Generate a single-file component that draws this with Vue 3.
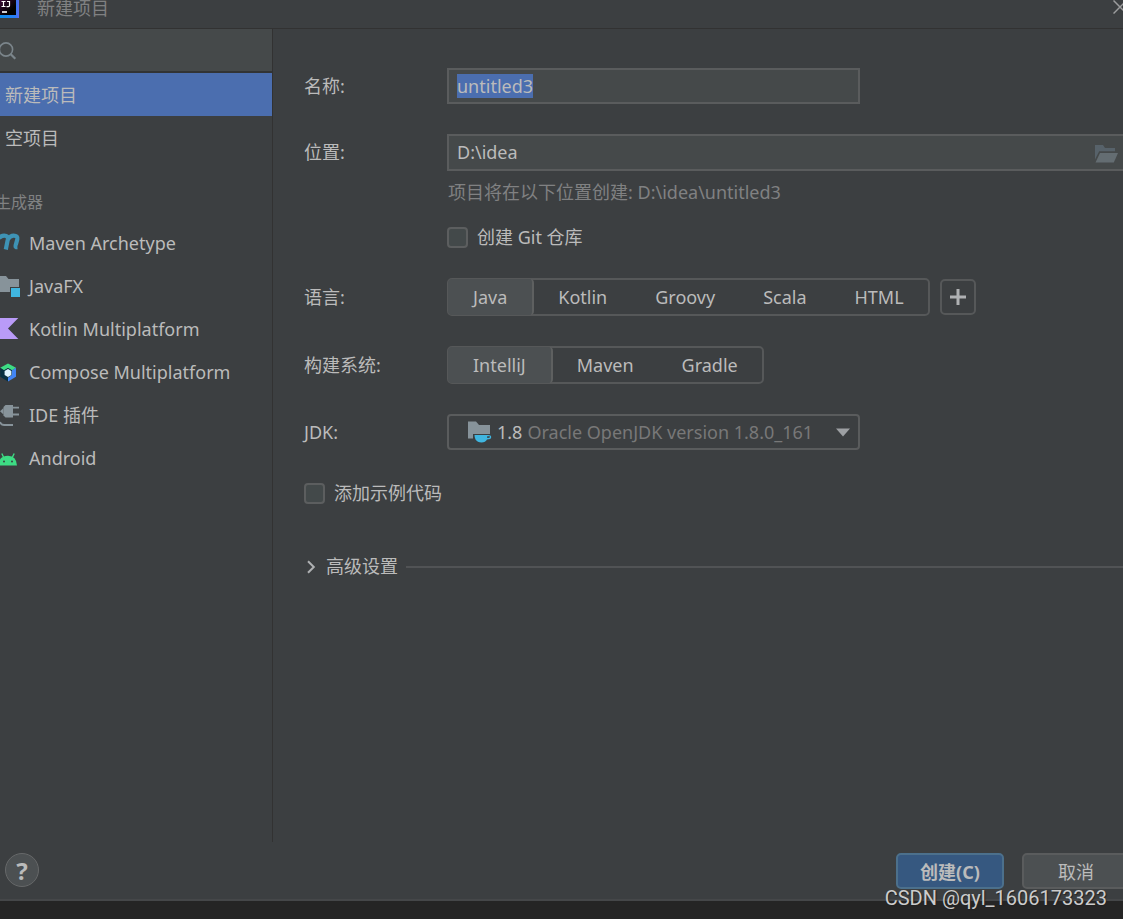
<script setup>
import { onMounted, ref } from 'vue'

const projectName = ref('untitled3')
const location = ref('D:\\idea')
const gitRepo = ref(false)
const sampleCode = ref(false)
const jdk = ref('1.8')
const language = ref('Java')
const buildSystem = ref('IntelliJ')
const search = ref('')
const nameInput = ref(null)

const languages = ['Java', 'Kotlin', 'Groovy', 'Scala', 'HTML']
const buildSystems = ['IntelliJ', 'Maven', 'Gradle']
const generators = [
  { id: 'maven', label: 'Maven Archetype' },
  { id: 'javafx', label: 'JavaFX' },
  { id: 'kotlin', label: 'Kotlin Multiplatform' },
  { id: 'compose', label: 'Compose Multiplatform' },
  { id: 'plugin', label: 'IDE 插件' },
  { id: 'android', label: 'Android' },
]

onMounted(() => {
  nameInput.value.focus()
  nameInput.value.select()
})
</script>

<template>
  <div class="screen">
    <div class="dialog">
      <header class="titlebar">
        <svg class="logo" width="19" height="18" viewBox="0 0 19 18" aria-hidden="true">
          <defs>
            <linearGradient id="logo-edge" x1="0" y1="0" x2="1" y2="0">
              <stop offset="0" stop-color="#0b8ff0" />
              <stop offset="0.8" stop-color="#2a7df5" />
              <stop offset="1" stop-color="#5b6bf0" />
            </linearGradient>
            <linearGradient id="logo-core" x1="0" y1="0" x2="1" y2="1">
              <stop offset="0" stop-color="#3a0a35" />
              <stop offset="0.7" stop-color="#000" />
            </linearGradient>
          </defs>
          <rect width="19" height="18" fill="url(#logo-edge)" />
          <rect width="16" height="15" fill="url(#logo-core)" />
          <path d="M1.5 1.5h4M3.5 1.5v5M1.5 6.5h4M7 1.5h2.5v4q0 1.2-1.2 1.2H6.5" fill="none" stroke="#fff" stroke-width="1.2" />
          <path d="M2 12h5" stroke="#fff" stroke-width="1.6" />
        </svg>
        <h1>新建项目</h1>
        <button class="close" type="button" aria-label="关闭">
          <svg width="14" height="14" viewBox="0 0 14 14"><path d="M0.5 0.5l13 13M13.5 0.5l-13 13" stroke="#9c9d9e" stroke-width="1.5" /></svg>
        </button>
      </header>

      <div class="body">
        <aside class="sidebar">
          <label class="search">
            <svg width="17" height="20" viewBox="0 0 17 20" aria-hidden="true">
              <circle cx="6" cy="9.5" r="6.6" fill="none" stroke="#7b858b" stroke-width="1.6" />
              <path d="M10.5 14l4.8 4.8" stroke="#7b858b" stroke-width="2.2" />
            </svg>
            <input v-model="search" type="search" aria-label="搜索" />
          </label>
          <nav>
            <button class="entry selected" type="button">新建项目</button>
            <button class="entry" type="button">空项目</button>
            <h2>生成器</h2>
            <button v-for="g in generators" :key="g.id" class="entry generator" type="button">
              <svg width="21" height="24" viewBox="0 0 21 24" aria-hidden="true">
                <g v-if="g.id === 'maven'" fill="none" stroke="#3e93b5" stroke-width="4.2">
                  <path d="M-1 6Q1.2 3.6 4.2 3.6Q8.4 3.6 7.8 7.4L5.8 17.5" />
                  <path d="M7.8 7.4Q10.2 3.6 13.6 3.6Q18 3.6 17.3 7.4L15.6 13.6Q15.2 15.4 17.4 15.2" />
                </g>
                <g v-else-if="g.id === 'javafx'">
                  <path d="M0 1h6l2.5 3H19v8h-9V17H0z" fill="#87939a" />
                  <path d="M11 13h9v9h-9z" fill="#40b6e0" />
                </g>
                <path v-else-if="g.id === 'kotlin'" d="M0 0h18.3L8 10.5l10.3 10.5H0z" fill="#b99bf8" />
                <g v-else-if="g.id === 'compose'">
                  <path d="M8 2.5l8 4.3-4 2.6L8 7l-4 2.4-3.8-2.6z" fill="#3ddc84" />
                  <path d="M0.2 6.8L4 9.2v4.6l4 2.7V20.5L0.2 15.8z" fill="#083042" />
                  <path d="M16 6.8v9L8 20.5v-4l4-2.7V9.2z" fill="#4285f4" />
                  <path d="M4 9.2L8 7l4 2.2v4.6l-4 2.7-4-2.7z" fill="#083042" />
                  <path d="M8 8l3.4 2v4L8 16l-3.4-2v-4z" fill="#dff4ff" />
                </g>
                <g v-else-if="g.id === 'plugin'">
                  <path d="M5.5 1H13v12.5H5.5L3.5 11.5V3z" fill="#87939a" />
                  <path d="M0 7.2L3.5 4v6.4z" fill="#87939a" />
                  <path d="M13 3.7h6M13 10.5h6M0 18q1 3 4 3h9" fill="none" stroke="#87939a" stroke-width="1.8" />
                </g>
                <g v-else>
                  <path d="M-2 18.5Q-1.3 9 8 8.8Q16.4 9 17 18.5z" fill="#3ddc84" />
                  <path d="M1.8 6.5l2.4 5M14.2 6.5l-2.4 5" stroke="#3ddc84" stroke-width="1.4" />
                  <circle cx="4" cy="14.5" r="1" fill="#3c3f41" />
                  <circle cx="12" cy="14.5" r="1" fill="#3c3f41" />
                </g>
              </svg>
              {{ g.label }}
            </button>
          </nav>
        </aside>

        <main class="form">
          <div class="row">
            <label for="name">名称:</label>
            <input id="name" ref="nameInput" v-model="projectName" class="field medium" type="text" spellcheck="false" />
          </div>
          <div class="row">
            <label for="location">位置:</label>
            <div class="field path">
              <input id="location" v-model="location" type="text" spellcheck="false" />
              <button type="button" aria-label="浏览">
                <svg width="24" height="18" viewBox="0 0 24 18">
                  <path d="M0 0h8l2 3h10v3.3H4.2L0 14.5z" fill="#57626a" />
                  <path d="M5 8h18l-4.2 9.5H0.5z" fill="#646d72" />
                </svg>
              </button>
            </div>
          </div>
          <p class="hint">项目将在以下位置创建: D:\idea\untitled3</p>
          <label class="check git"><input v-model="gitRepo" type="checkbox" />创建 Git 仓库</label>
          <div class="row">
            <span class="caption">语言:</span>
            <div class="segments" role="group" aria-label="语言">
              <button v-for="l in languages" :key="l" type="button" :class="{ active: l === language }" :aria-pressed="l === language" @click="language = l">{{ l }}</button>
            </div>
            <button class="plus" type="button" aria-label="添加语言">
              <svg width="16" height="16" viewBox="0 0 16 16"><path d="M8 0v16M0 8h16" stroke="#afb1b3" stroke-width="3" /></svg>
            </button>
          </div>
          <div class="row">
            <span class="caption">构建系统:</span>
            <div class="segments" role="group" aria-label="构建系统">
              <button v-for="b in buildSystems" :key="b" type="button" :class="{ active: b === buildSystem }" :aria-pressed="b === buildSystem" @click="buildSystem = b">{{ b }}</button>
            </div>
          </div>
          <div class="row">
            <label for="jdk">JDK:</label>
            <div class="combo medium">
              <svg width="24" height="22" viewBox="0 0 24 22" aria-hidden="true">
                <path d="M0 0.5h8l3 3.5h11v9H5v4.5H0z" fill="#87939a" />
                <path d="M6.5 14h13.5q3.3 0 3.2 2.2t-4.2 2.2q-1.5 3-5.5 3t-6-3q-1-1.6-1-4.4z" fill="#40b6e0" />
                <path d="M19.2 15.3h2q.8 0 .8.8t-2.8.9z" fill="#3c3f41" />
              </svg>
              <span class="version">1.8</span>
              <span class="vendor">Oracle OpenJDK version 1.8.0_161</span>
              <svg class="arrow" width="14" height="9" viewBox="0 0 14 9" aria-hidden="true"><path d="M0 0.5h14L7 8.5z" fill="#9da0a3" /></svg>
              <select id="jdk" v-model="jdk"><option value="1.8">1.8 Oracle OpenJDK version 1.8.0_161</option></select>
            </div>
          </div>
          <label class="check sample"><input v-model="sampleCode" type="checkbox" />添加示例代码</label>
          <button class="advanced" type="button">
            <svg width="14" height="14" viewBox="0 0 14 14" aria-hidden="true"><path d="M4 1.2L9.8 7 4 12.8" fill="none" stroke="#afb1b3" stroke-width="2" /></svg>
            高级设置
          </button>
        </main>
      </div>

      <footer>
        <button class="help" type="button" aria-label="帮助">?</button>
        <div class="actions">
          <button class="primary" type="button">创建(C)</button>
          <button class="cancel" type="button">取消</button>
        </div>
      </footer>
    </div>
    <div class="watermark">CSDN @qyl_1606173323</div>
  </div>
</template>

<style>
body {
  margin: 0;
  background: #252525;
}
</style>

<style scoped>
* {
  box-sizing: border-box;
}

.screen {
  position: relative;
  display: flex;
  min-height: 100vh;
  padding-bottom: 18px;
  overflow: hidden;
  background: #252525;
  color: #bbbbbb;
  font: 18px/25px "Noto Sans", "Noto Sans CJK SC", sans-serif;
}

button,
input,
select {
  font: inherit;
  color: inherit;
  border: 0;
  background: none;
  padding: 0;
  margin: 0;
  outline: none;
}

svg {
  display: block;
  flex: none;
}

.dialog {
  flex: 1;
  min-width: 0;
  display: flex;
  flex-direction: column;
  background: #3c3f41;
  border-bottom: 2px solid #454749;
}

.titlebar {
  display: flex;
  align-items: flex-start;
  height: 29px;
  border-bottom: 1px solid #323232;
}

.titlebar h1 {
  flex: 1;
  margin: 0 0 0 18px;
  font-size: 18px;
  font-weight: 400;
  line-height: 17px;
  color: #808182;
}

.close {
  margin-right: -4px;
}

.body {
  flex: 1;
  display: flex;
}

.sidebar {
  width: 273px;
  flex: none;
  border-right: 1px solid #323232;
}

.search {
  display: flex;
  align-items: center;
  height: 44px;
  background: #45494a;
  border-bottom: 2px solid #323435;
}

.search input {
  flex: 1;
  min-width: 0;
  appearance: none;
}

.entry {
  display: flex;
  align-items: center;
  width: 100%;
  height: 43px;
  padding: 2px 0 0 5px;
  text-align: left;
}

.entry.selected {
  background: #4b6eaf;
}

.entry.generator {
  gap: 8px;
  padding-left: 0;
}

.sidebar h2 {
  margin: 32px 0 8px -5px;
  font-size: 16px;
  font-weight: 400;
  line-height: 22px;
  color: #808182;
}

.form {
  flex: 1;
  min-width: 0;
  display: flex;
  flex-direction: column;
  padding: 39px 0 0 31px;
}

.row {
  display: flex;
  align-items: center;
  margin-bottom: 30px;
}

.row > label,
.caption {
  flex: none;
  width: 143px;
}

.field {
  height: 36px;
  padding: 0 8px;
  background: #45494a;
  border: 2px solid #5a5c5d;
}

.medium {
  width: 413px;
}

.field::selection {
  background: #4b6eaf;
  color: #bbbbbb;
}

.path {
  flex: 1;
  display: flex;
  align-items: center;
  height: 37px;
  border-right: 0;
  padding-right: 4px;
}

.path input {
  flex: 1;
  min-width: 0;
}

.path button {
  padding-top: 2px;
}

.hint {
  margin: -21px 0 0 144px;
  color: #808182;
}

.check {
  display: flex;
  align-items: center;
  gap: 9px;
  height: 25px;
}

.check input {
  appearance: none;
  width: 21px;
  height: 21px;
  background: #43494a;
  border: 2px solid #5c5e5f;
  border-radius: 4px;
}

.git {
  margin: 20px 0 28px 143px;
}

.sample {
  margin-top: 1px;
}

.segments {
  display: flex;
  height: 38px;
  border: 2px solid #565859;
  border-radius: 5px;
}

.segments button {
  padding: 0 24px;
}

.segments .active {
  padding: 0 25px;
  margin: -1px 0 -1px -1px;
  background: #4c5052;
  border-right: 2px solid #5e6060;
  border-radius: 4px;
}

.plus {
  display: grid;
  place-items: center;
  width: 36px;
  height: 36px;
  margin-left: 10px;
  border: 2px solid #565859;
  border-radius: 5px;
}

.combo {
  position: relative;
  display: flex;
  align-items: center;
  height: 36px;
  padding: 0 8px 0 19px;
  border: 2px solid #5a5c5d;
  border-radius: 4px;
  white-space: nowrap;
}

.version {
  margin: 0 5px;
}

.vendor {
  color: #787878;
}

.arrow {
  margin-left: auto;
}

.combo select {
  position: absolute;
  inset: 0;
  width: 100%;
  opacity: 0;
}

.advanced {
  display: flex;
  align-items: center;
  gap: 8px;
  margin-top: 48px;
}

.advanced::after {
  content: "";
  flex: 1;
  height: 2px;
  background: #515355;
}

footer {
  display: flex;
  justify-content: space-between;
  align-items: flex-start;
  height: 57px;
  padding: 11px 0 0 5px;
  overflow: hidden;
}

.help {
  width: 34px;
  height: 34px;
  border: 1px solid #666869;
  border-radius: 50%;
  background: #4c5052;
  font-size: 24px;
  font-weight: 700;
}

.actions {
  display: flex;
  gap: 18px;
  margin-right: -7px;
}

.actions button {
  width: 108px;
  height: 36px;
  padding-top: 2px;
  border-radius: 5px;
}

.primary {
  background: #365880;
  border: 2px solid #4c708c;
  font-weight: 700;
}

.cancel {
  background: #4c5052;
  border: 2px solid #5a5c5d;
}

.watermark {
  position: absolute;
  right: 16px;
  bottom: 8px;
  font: 20px/25px Roboto, sans-serif;
  color: #cccccc;
  text-shadow: 1px 1px 1px #222222;
}
</style>
